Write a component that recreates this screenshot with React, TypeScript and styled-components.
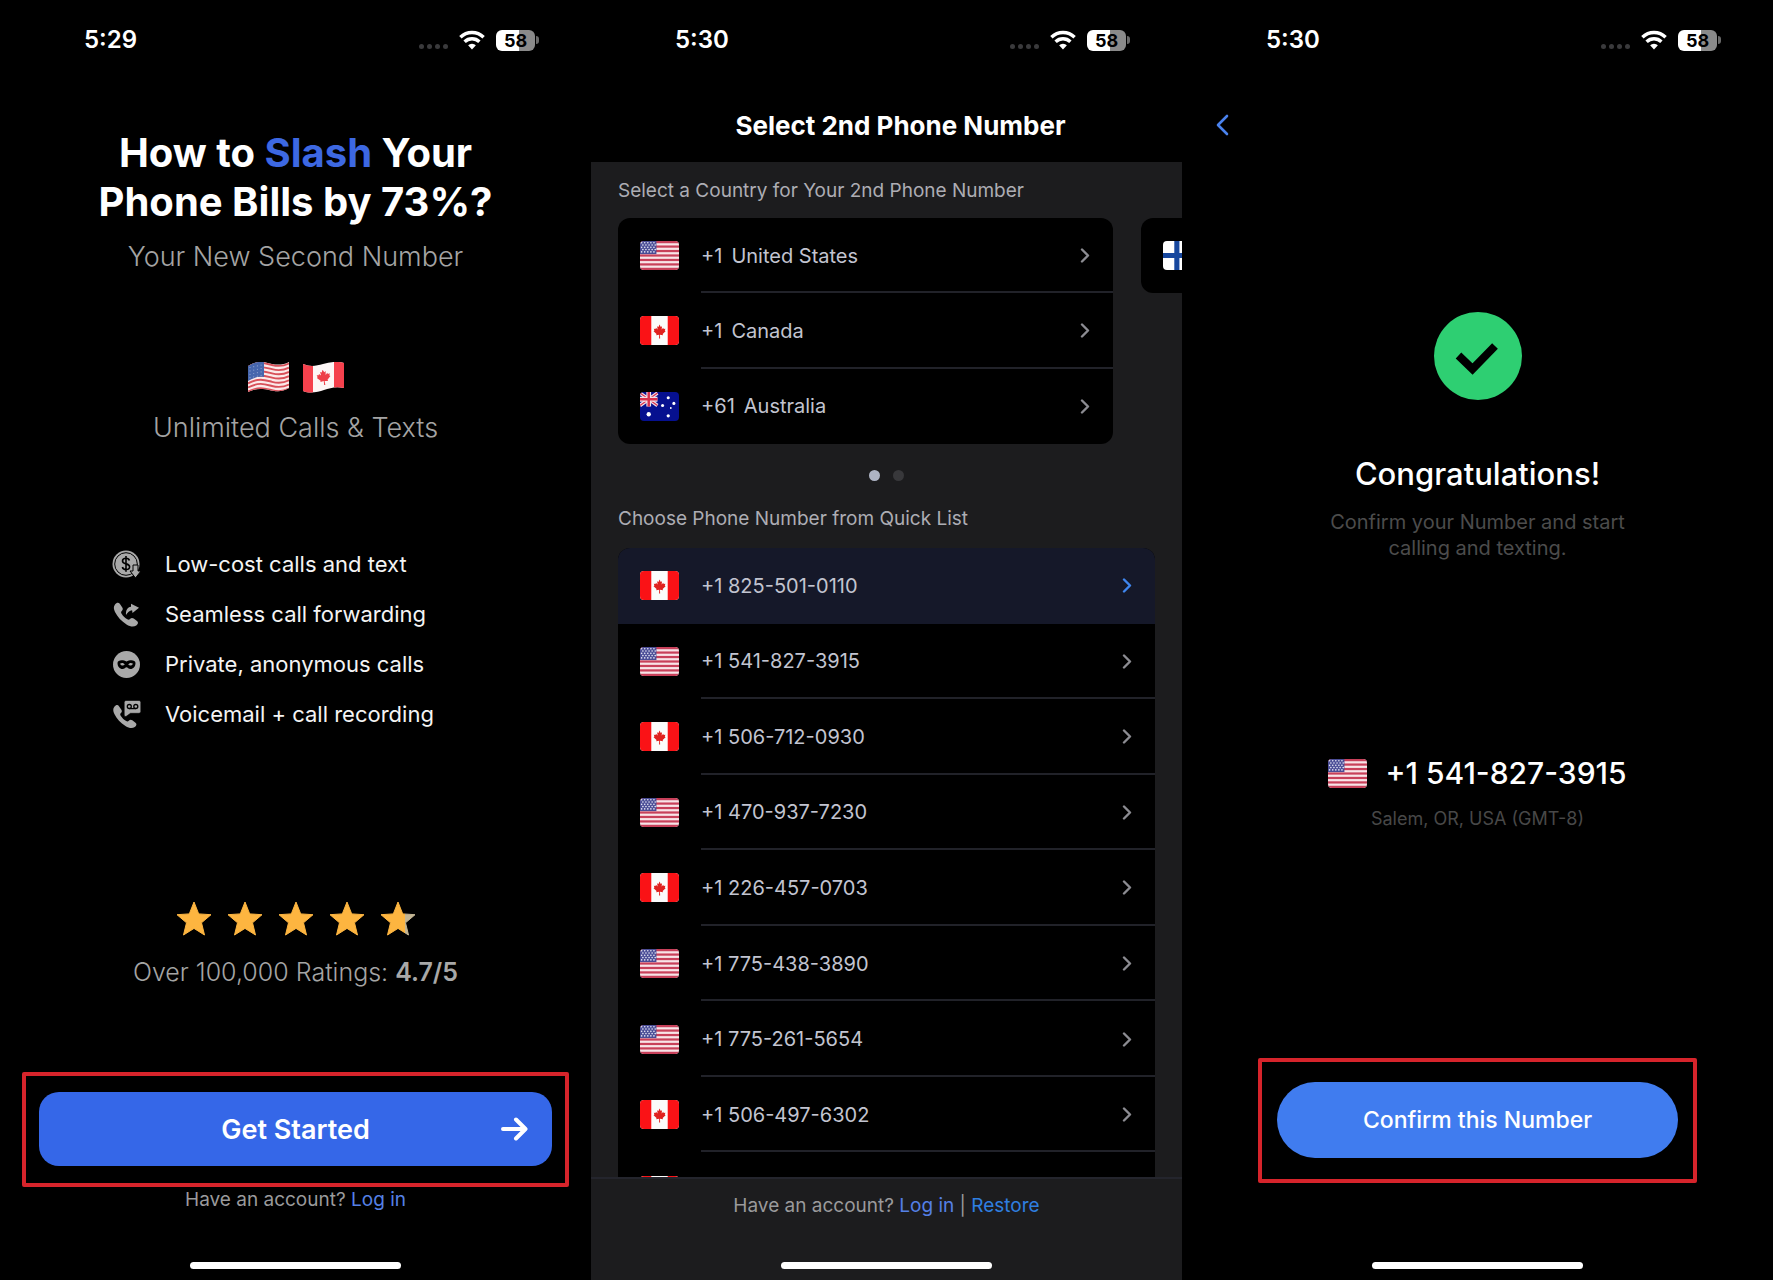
import React from "react";
import styled, { createGlobalStyle } from "styled-components";

const Global = createGlobalStyle`
  *, *::before, *::after { box-sizing: border-box; }
  html, body { margin: 0; background: #000; }
  body { font-family: Inter, "Liberation Sans", sans-serif; color: #fff; }
  button { font: inherit; color: inherit; background: none; border: 0; padding: 0; cursor: pointer; }
  h1, h2, p, ul { margin: 0; padding: 0; font-weight: inherit; }
  ul { list-style: none; }
  svg { display: block; }
`;

const Page = styled.div`
  display: grid;
  grid-template-columns: repeat(3, minmax(0, 1fr));
  min-height: 100vh;
`;

const Screen = styled.section`
  display: flex;
  flex-direction: column;
  align-items: stretch;
  min-height: 100vh;
  overflow: hidden;
  background: #000;
`;

/* ---------- status bar ---------- */

const StatusRow = styled.div`
  display: flex;
  flex: none;
  align-items: center;
  justify-content: space-between;
  height: 80px;
  padding: 0 52px 0 84px;
`;

const Clock = styled.time`
  font-size: 24px;
  line-height: 30px;
  font-weight: 600;
`;

const StatusIcons = styled.div`
  display: flex;
  align-items: center;
  gap: 11px;
`;

const Signal = styled.div`
  display: flex;
  gap: 3px;
  padding-top: 13px;
  span { width: 5px; height: 5px; border-radius: 50%; background: #3a3a3c; }
`;

const Battery = styled.div`
  display: flex;
  align-items: center;
  gap: 1px;
`;

const Cell = styled.span`
  width: 39px;
  height: 21px;
  border-radius: 6px;
  background: linear-gradient(90deg, #fff 58%, #8a8a8a 58%);
  color: #000;
  font-size: 18px;
  line-height: 21px;
  font-weight: 700;
  text-align: center;
`;

const Nub = styled.span`
  width: 3px;
  height: 8px;
  border-radius: 0 3px 3px 0;
  background: #6a6a6a;
`;

function StatusBar({ time }: { time: string }) {
  return (
    <StatusRow>
      <Clock>{time}</Clock>
      <StatusIcons>
        <Signal><span /><span /><span /><span /></Signal>
        <svg width="26" height="20" viewBox="0 0 26 20" fill="none" stroke="#fff" strokeWidth="3.4">
          <path d="M1.4 7.2a16.6 16.6 0 0 1 23.2 0" />
          <path d="M5.6 11.7a10.6 10.6 0 0 1 14.8 0" />
          <path d="M13 19.6l-3.9-4.3a5.8 5.8 0 0 1 7.8 0z" fill="#fff" stroke="none" />
        </svg>
        <Battery><Cell>58</Cell><Nub /></Battery>
      </StatusIcons>
    </StatusRow>
  );
}

const HomeBar = styled.div`
  flex: none;
  width: 211px;
  height: 7px;
  margin: auto auto 11px;
  border-radius: 4px;
  background: #fff;
`;

/* ---------- flags ---------- */

const LEAF = "M12 3l1.7 3.2 2-1-.7 4.4 2.5-2.3.6 1.5 2.6-.4-.9 2.5 1.2.8-4.4 3.7.5 1.6-4.5-.6.2 4.6h-1.6l.2-4.6-4.5.6.5-1.6L3 11.7l1.2-.8-.9-2.5 2.6.4.6-1.5L9 9.6 8.3 5.2l2 1z";

type Country = "us" | "ca" | "au" | "fi";

const FlagBox = styled.svg`
  flex: none;
  width: 39px;
  height: 29px;
  border-radius: 4px;
`;

function Flag({ country }: { country: Country }) {
  return (
    <FlagBox viewBox="0 0 38 28" preserveAspectRatio="none">
      {country === "us" && <UsArt />}
      {country === "ca" && <CaArt />}
      {country === "au" && (
        <>
          <rect width="38" height="28" fill="#06108f" />
          <path d="M0 1l17 12M17 1L0 13" stroke="#f3dfe8" strokeWidth="3.4" />
          <path d="M0 1l17 12M17 1L0 13" stroke="#d8304c" strokeWidth="1.2" />
          <path d="M8.5 0v14M0 7h17" stroke="#f3dfe8" strokeWidth="4.6" />
          <path d="M8.5 0v14M0 7h17" stroke="#d8304c" strokeWidth="2.4" />
          <g fill="#fff">
            <circle cx="8.5" cy="21.5" r="2.1" />
            <circle cx="27.5" cy="5.5" r="1.5" />
            <circle cx="22" cy="13" r="1.5" />
            <circle cx="33" cy="11" r="1.5" />
            <circle cx="27.5" cy="23" r="1.6" />
            <circle cx="30" cy="15.5" r="0.9" />
          </g>
        </>
      )}
      {country === "fi" && (
        <>
          <rect width="38" height="28" fill="#fff" />
          <path d="M13.5 0v28M0 14h38" stroke="#17479e" strokeWidth="5" />
        </>
      )}
    </FlagBox>
  );
}

function UsArt() {
  const stars = [];
  for (let row = 0; row < 5; row++)
    for (let col = 0; col < 5; col++)
      stars.push(<circle key={`${row}-${col}`} cx={1.6 + col * 3 + (row % 2) * 1.2} cy={1.7 + row * 2.2} r="0.8" />);
  return (
    <>
      <rect width="38" height="28" fill="#f8e4e8" />
      {[0, 1, 2, 3, 4, 5, 6].map((i) => (
        <rect key={i} y={i * 4.308} width="38" height="2.154" fill="#c8405a" />
      ))}
      <rect width="16" height="12.6" fill="#4a4d96" />
      <g fill="#e4e5f4">{stars}</g>
    </>
  );
}

function CaArt() {
  return (
    <>
      <rect width="38" height="28" fill="#fbfbfb" />
      <path d="M0 0h11v28H0zM27 0h11v28H27z" fill="#fa1216" />
      <path d={LEAF} fill="#e0211f" transform="translate(11.3 5.9) scale(.65 .75)" />
    </>
  );
}

function WavyUs() {
  const wave = (y: number) => `M1 ${y}C12 ${y - 6} 19 ${y - 3} 25 ${y - 1.5}S37 ${y - 0.5} 42 ${y - 3}`;
  return (
    <svg width="43" height="31" viewBox="0 0 43 31">
      <clipPath id="wave-us"><path d="M1 4C12-3 20 1 25 2s12 1 17-2v26c-8 5-15 3-20 2S8 26 1 30z" /></clipPath>
      <g clipPath="url(#wave-us)">
        <rect width="43" height="31" fill="#fbe9ea" />
        {[0, 1, 2, 3, 4, 5, 6, 7].map((i) => (
          <path key={i} d={wave(4.5 + i * 4.2)} fill="none" stroke="#d8505a" strokeWidth="1.9" />
        ))}
        <path d="M1 4C7 0 12-1 17 0v15c-6-1-11 1-16 4z" fill="#4666ad" />
        <g fill="#8fa3d0">
          {[0, 1, 2, 3].map((r) => [0, 1, 2, 3].map((c) => (
            <circle key={`${r}${c}`} cx={3 + c * 3.7} cy={5.5 + r * 3.4 - c * 0.8} r="0.6" />
          )))}
        </g>
      </g>
    </svg>
  );
}

function WavyCa() {
  return (
    <svg width="43" height="31" viewBox="0 0 43 31">
      <clipPath id="wave-ca"><path d="M1 2C8 5 14 4 21 2S35-1 42 1v25c-8-2-14 0-20 2S8 32 1 29z" /></clipPath>
      <g clipPath="url(#wave-ca)">
        <rect width="43" height="31" fill="#fdf6f6" />
        <path d="M0 0h11v31H0zM32 0h11v31H32z" fill="#f5414d" />
        <path d={LEAF} fill="#ee3f48" transform="translate(12.5 5) rotate(-8 9 10) scale(.76 .86)" />
      </g>
    </svg>
  );
}

/* ---------- welcome screen ---------- */

const Headline = styled.h1`
  margin-top: 48px;
  font-size: 40px;
  line-height: 49px;
  font-weight: 700;
  text-align: center;
  em { font-style: normal; color: #3d68e2; }
`;

const Lead = styled.p<{ $top: number }>`
  margin-top: ${(p) => p.$top}px;
  font-size: 27px;
  line-height: 34px;
  font-weight: 300;
  text-align: center;
  color: #a4a4a4;
`;

const FlagPair = styled.div`
  display: flex;
  justify-content: center;
  gap: 12px;
  margin-top: 88px;
`;

const Features = styled.ul`
  margin: 94px 0 0 112px;
`;

const Feature = styled.li`
  display: flex;
  align-items: center;
  gap: 24px;
  font-size: 22px;
  line-height: 50px;
  color: #f4f4f4;
`;

const Stars = styled.div`
  display: flex;
  justify-content: center;
  gap: 17px;
  margin-top: 163px;
`;

const Ratings = styled.p`
  margin-top: 21px;
  font-size: 25px;
  line-height: 30px;
  font-weight: 300;
  text-align: center;
  color: #a4a4a4;
  strong { font-weight: 600; color: #a8a8a8; }
`;

const Highlight = styled.div<{ $top: number; $side: number; $pad: string }>`
  margin: ${(p) => `${p.$top}px ${p.$side}px 0`};
  padding: ${(p) => p.$pad};
  border: 4px solid #d6242b;
  border-radius: 2px;
`;

const StartButton = styled.button`
  display: grid;
  grid-template-columns: 1fr auto 1fr;
  align-items: center;
  width: 100%;
  height: 74px;
  padding: 0 24px;
  border-radius: 20px;
  background: #3567e8;
  font-size: 27px;
  font-weight: 600;
  span { grid-column: 2; }
  svg { justify-self: end; }
`;

const Account = styled.p`
  font-size: 19px;
  line-height: 26px;
  text-align: center;
  color: #9a9a9c;
`;

const TextLink = styled.a<{ $tone?: string }>`
  color: ${(p) => p.$tone ?? "#5580e6"};
  text-decoration: none;
`;

const HANDSET = "M3 4.5C4.500 2.500 6.500 2 7.800 3.800L10.300 7.500C11.200 9 10.800 10 9.600 11.200 8.800 12 9 12.800 9.800 14 11.300 16.400 13 18 15.300 19.300 16.400 19.900 17.200 19.900 18 19 19.200 17.800 20.300 17.600 21.700 18.600L25 21C26.600 22.300 26.200 24 24.300 25.400 21.500 27.300 18.500 26.800 14.500 24.400 9.500 21.300 5.500 17 3 12 1.600 9 1.300 6.700 3 4.500Z";

const GREY = "#a9a9a9";

function CoinIcon() {
  return (
    <svg width="29" height="29" viewBox="0 0 29 29" fill="none">
      <circle cx="14" cy="14" r="13.5" fill={GREY} />
      <circle cx="14" cy="14" r="11.3" stroke="#000" strokeWidth="1" />
      <path d="M17.4 10.500c-.4-1.500-1.700-2.200-3.400-2.200-2 0-3.500 1-3.500 2.700 0 3.900 7.100 1.800 7.100 5.700 0 1.700-1.600 2.800-3.600 2.800-1.900 0-3.300-.9-3.600-2.500M14 6v15.800" stroke="#000" strokeWidth="1.6" />
      <path d="M21 15h5v6h3l-5.500 7L18 21h3z" fill={GREY} stroke="#000" strokeWidth="1" />
    </svg>
  );
}

function ForwardIcon() {
  return (
    <svg width="29" height="29" viewBox="0 0 29 29" fill={GREY}>
      <path d={HANDSET} />
      <path d="M14 15c-.3-5 1.500-7.600 5-8.200V3.800l8 4-6.500 5.200-.4-2.800c-2.600.2-4.500 2-6.100 4.800z" />
    </svg>
  );
}

function MaskIcon() {
  return (
    <svg width="29" height="29" viewBox="0 0 29 29">
      <circle cx="14.5" cy="14.5" r="13.5" fill={GREY} />
      <path d="M5.500 13c0-3.600 6-3.300 9-1.600 3-1.700 9-2 9 1.600 0 3.500-2.200 6-5 6-2 0-2.800-1.800-4-1.800s-2 1.800-4 1.800c-2.800 0-5-2.500-5-6z" fill="#000" />
      <path d="M8 13.800c1.500-1.400 3.700-1.200 4.800.7-1.400 1.500-3.800 1.500-4.800-.7zM21 13.800c-1.500-1.400-3.700-1.200-4.800.7 1.400 1.500 3.800 1.500 4.800-.7z" fill={GREY} />
    </svg>
  );
}

function VoicemailIcon() {
  return (
    <svg width="29" height="29" viewBox="0 0 29 29" fill={GREY}>
      <path d={HANDSET} transform="translate(-.5 2.500) scale(.96)" />
      <path d="M14 .5h13q1.800 0 1.800 1.800v9.200q0 1.800-1.800 1.800h-8.500l-4.500 3.200q-1.800.5-1.800-1.500V2.300Q12.200.5 14 .5z" stroke="#000" strokeWidth=".6" />
      <g fill="none" stroke="#000" strokeWidth="1.300">
        <circle cx="17.300" cy="6.500" r="2" />
        <circle cx="23.800" cy="6.500" r="2" />
        <path d="M17.300 8.600h6.500" />
      </g>
    </svg>
  );
}

const STAR = "M17 0l4.700 11.900L34 12.700l-9.500 8.100L27.500 33 17 26.400 6.500 33l3-12.200L0 12.700l12.300-.8z";

function Star({ part = 100 }: { part?: number }) {
  const id = `star-${part}`;
  return (
    <svg width="34" height="34" viewBox="0 0 34 34">
      <linearGradient id={id}>
        <stop offset={`${part}%`} stopColor="#fdb540" />
        <stop offset={`${part}%`} stopColor="#c3b594" />
      </linearGradient>
      <path d={STAR} fill={`url(#${id})`} stroke={`url(#${id})`} strokeWidth="1" strokeLinejoin="round" />
    </svg>
  );
}

function Welcome() {
  return (
    <Screen>
      <StatusBar time="5:29" />
      <Headline>How to <em>Slash</em> Your<br />Phone Bills by 73%?</Headline>
      <Lead $top={14}>Your New Second Number</Lead>
      <FlagPair><WavyUs /><WavyCa /></FlagPair>
      <Lead $top={18}>Unlimited Calls &amp; Texts</Lead>
      <Features>
        <Feature><CoinIcon />Low-cost calls and text</Feature>
        <Feature><ForwardIcon />Seamless call forwarding</Feature>
        <Feature><MaskIcon />Private, anonymous calls</Feature>
        <Feature><VoicemailIcon />Voicemail + call recording</Feature>
      </Features>
      <Stars><Star /><Star /><Star /><Star /><Star part={70} /></Stars>
      <Ratings>Over 100,000 Ratings: <strong>4.7/5</strong></Ratings>
      <Highlight $top={85} $side={22} $pad="16px 13px 17px">
        <StartButton type="button">
          <span>Get Started</span>
          <svg width="28" height="26" viewBox="0 0 28 26" fill="none" stroke="#fff" strokeWidth="4" strokeLinecap="round" strokeLinejoin="round">
            <path d="M3 13h22M16 3.500l9.500 9.500-9.500 9.500" />
          </svg>
        </StartButton>
      </Highlight>
      <Account>Have an account? <TextLink href="#login">Log in</TextLink></Account>
      <HomeBar />
    </Screen>
  );
}

/* ---------- number selection screen ---------- */

const TitleBar = styled.h2`
  flex: none;
  height: 82px;
  padding: 27px 0 0 28px;
  font-size: 26px;
  line-height: 38px;
  font-weight: 700;
  text-align: center;
`;

const Body = styled.div`
  display: flex;
  flex: 1 1 0;
  flex-direction: column;
  min-height: 0;
  padding: 16px 0 0 27px;
  overflow: hidden;
  background: #1c1c1e;
`;

const SectionLabel = styled.p`
  flex: none;
  font-size: 19px;
  line-height: 26px;
  color: #adadb4;
`;

const Carousel = styled.div`
  display: flex;
  flex: none;
  align-items: flex-start;
  gap: 28px;
  margin-top: 14px;
  overflow: hidden;
`;

const Card = styled.ul<{ $rows: number }>`
  display: grid;
  flex: 0 0 calc(100% - 69px);
  grid-template-rows: repeat(${(p) => p.$rows}, 1fr);
  min-height: ${(p) => (p.$rows === 1 ? 75 : 226)}px;
  border-radius: 12px;
  background: #000;
  overflow: hidden;
`;

const NumberList = styled.ul`
  display: grid;
  grid-template-rows: repeat(9, 1fr);
  flex: none;
  min-height: 680px;
  margin: 16px 27px 0 0;
  border-radius: 12px 12px 0 0;
  background: #000;
  overflow: hidden;
`;

const Row = styled.button<{ $active?: boolean }>`
  display: flex;
  align-items: center;
  gap: 22px;
  width: 100%;
  height: 100%;
  padding-left: 22px;
  text-align: left;
  background: ${(p) => (p.$active ? "#151829" : "transparent")};
`;

const RowBody = styled.span<{ $line: boolean }>`
  display: flex;
  flex: 1;
  align-items: center;
  align-self: stretch;
  gap: 9px;
  padding-right: 23px;
  box-shadow: inset 0 -2px ${(p) => (p.$line ? "#212229" : "transparent")};
  font-size: 20px;
  color: #c2c4d0;
  svg { margin-left: auto; }
`;

function RowArrow({ active }: { active?: boolean }) {
  return (
    <svg width="10" height="15" viewBox="0 0 10 15" fill="none" stroke={active ? "#3f86ee" : "#8c8c92"} strokeWidth="2.400" strokeLinecap="round" strokeLinejoin="round">
      <path d="M2 1.500l6 6-6 6" />
    </svg>
  );
}

const Dots = styled.div`
  display: flex;
  flex: none;
  justify-content: center;
  gap: 13px;
  margin: 26px 27px 25px 0;
`;

const Dot = styled.span<{ $on?: boolean }>`
  width: 11px;
  height: 11px;
  border-radius: 50%;
  background: ${(p) => (p.$on ? "#aeb4c4" : "#38383b")};
`;

const Footer = styled.footer`
  display: flex;
  flex: none;
  flex-direction: column;
  height: 103px;
  padding-top: 14px;
  border-top: 2px solid #24252d;
  background: #1c1c1e;
`;

const countries: { flag: Country; code: string; name: string }[] = [
  { flag: "us", code: "+1", name: "United States" },
  { flag: "ca", code: "+1", name: "Canada" },
  { flag: "au", code: "+61", name: "Australia" },
];

const numbers: { flag: Country; number: string }[] = [
  { flag: "ca", number: "+1 825-501-0110" },
  { flag: "us", number: "+1 541-827-3915" },
  { flag: "ca", number: "+1 506-712-0930" },
  { flag: "us", number: "+1 470-937-7230" },
  { flag: "ca", number: "+1 226-457-0703" },
  { flag: "us", number: "+1 775-438-3890" },
  { flag: "us", number: "+1 775-261-5654" },
  { flag: "ca", number: "+1 506-497-6302" },
];

function SelectNumber() {
  return (
    <Screen>
      <StatusBar time="5:30" />
      <TitleBar>Select 2nd Phone Number</TitleBar>
      <Body>
        <SectionLabel>Select a Country for Your 2nd Phone Number</SectionLabel>
        <Carousel>
          <Card $rows={3}>
            {countries.map((c, i) => (
              <li key={c.name}>
                <Row type="button">
                  <Flag country={c.flag} />
                  <RowBody $line={i < countries.length - 1}>
                    <span>{c.code}</span>
                    <span>{c.name}</span>
                    <RowArrow />
                  </RowBody>
                </Row>
              </li>
            ))}
          </Card>
          <Card $rows={1}>
            <li><Row type="button" aria-label="Finland"><Flag country="fi" /></Row></li>
          </Card>
        </Carousel>
        <Dots><Dot $on /><Dot /></Dots>
        <SectionLabel>Choose Phone Number from Quick List</SectionLabel>
        <NumberList>
          {numbers.map((n, i) => (
            <li key={n.number}>
              <Row type="button" $active={i === 0}>
                <Flag country={n.flag} />
                <RowBody $line={i > 0}>
                  <span>{n.number}</span>
                  <RowArrow active={i === 0} />
                </RowBody>
              </Row>
            </li>
          ))}
          <li><Row type="button" aria-label="Next number"><Flag country="ca" /></Row></li>
        </NumberList>
      </Body>
      <Footer>
        <Account>
          Have an account? <TextLink href="#login">Log in</TextLink> | <TextLink href="#restore" $tone="#2f7fe0">Restore</TextLink>
        </Account>
        <HomeBar />
      </Footer>
    </Screen>
  );
}

/* ---------- confirmation screen ---------- */

const Nav = styled.nav`
  display: flex;
  flex: none;
  align-items: center;
  height: 90px;
  padding-left: 34px;
`;

const Success = styled.svg`
  flex: none;
  width: 88px;
  height: 88px;
  margin: 142px auto 0;
`;

const Congrats = styled.h2`
  margin-top: 55px;
  font-size: 31px;
  line-height: 38px;
  font-weight: 500;
  text-align: center;
`;

const Hint = styled.p`
  margin-top: 16px;
  font-size: 20px;
  line-height: 26px;
  font-weight: 400;
  text-align: center;
  color: #4c4c4c;
`;

const Chosen = styled.div`
  display: flex;
  align-items: center;
  justify-content: center;
  gap: 18px;
  margin-top: 194px;
  font-size: 30px;
  line-height: 36px;
  font-weight: 500;
`;

const Place = styled.p`
  margin-top: 16px;
  font-size: 18px;
  line-height: 24px;
  text-align: center;
  color: #484848;
`;

const ConfirmButton = styled.button`
  width: 100%;
  height: 76px;
  border-radius: 38px;
  background: #407cef;
  font-size: 23px;
  line-height: 30px;
  font-weight: 500;
`;

function Confirm() {
  return (
    <Screen>
      <StatusBar time="5:30" />
      <Nav>
        <button type="button" aria-label="Back">
          <svg width="13" height="22" viewBox="0 0 13 22" fill="none" stroke="#4a82ee" strokeWidth="2.600" strokeLinecap="round" strokeLinejoin="round">
            <path d="M11 2L2 11l9 9" />
          </svg>
        </button>
      </Nav>
      <Success viewBox="0 0 88 88">
        <circle cx="44" cy="44" r="44" fill="#2ecf72" />
        <path d="M24.500 43.500L38.500 57 61 34" fill="none" stroke="#000" strokeWidth="8" />
      </Success>
      <Congrats>Congratulations!</Congrats>
      <Hint>Confirm your Number and start<br />calling and texting.</Hint>
      <Chosen><Flag country="us" />+1 541-827-3915</Chosen>
      <Place>Salem, OR, USA (GMT-8)</Place>
      <Highlight $top={227} $side={76} $pad="20px 15px 21px">
        <ConfirmButton type="button">Confirm this Number</ConfirmButton>
      </Highlight>
      <HomeBar />
    </Screen>
  );
}

export default function App() {
  return (
    <>
      <Global />
      <Page>
        <Welcome />
        <SelectNumber />
        <Confirm />
      </Page>
    </>
  );
}
